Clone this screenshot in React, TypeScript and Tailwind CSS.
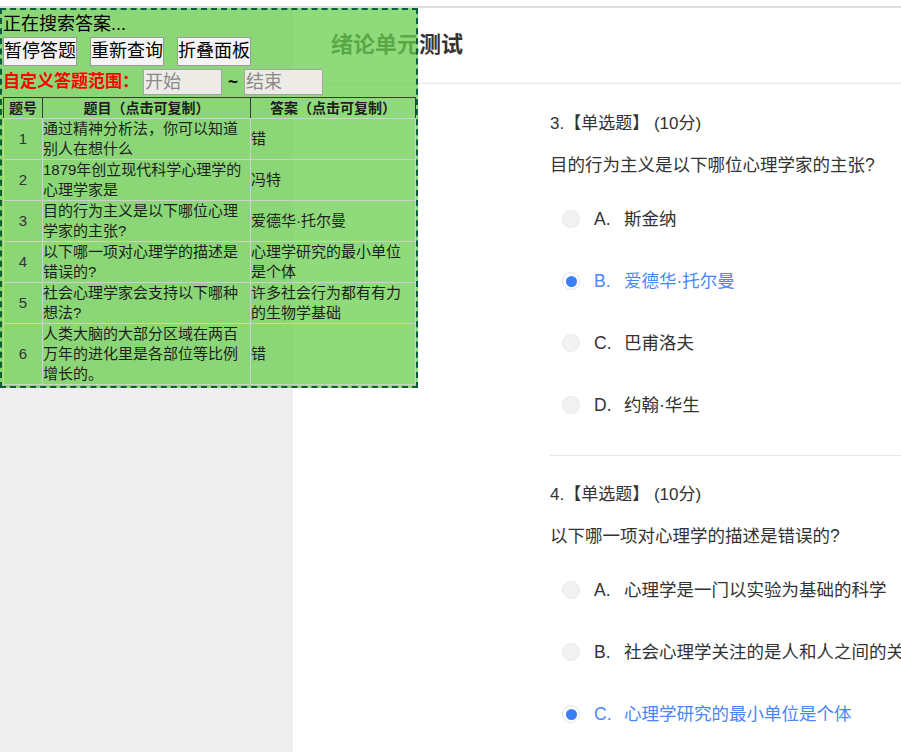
import React from "react";

const rows = [
  { q: "通过精神分析法，你可以知道别人在想什么", a: "错" },
  { q: "1879年创立现代科学心理学的心理学家是", a: "冯特" },
  { q: "目的行为主义是以下哪位心理学家的主张?", a: "爱德华·托尔曼" },
  { q: "以下哪一项对心理学的描述是错误的?", a: "心理学研究的最小单位是个体" },
  { q: "社会心理学家会支持以下哪种想法?", a: "许多社会行为都有有力的生物学基础" },
  { q: "人类大脑的大部分区域在两百万年的进化里是各部位等比例增长的。", a: "错" },
];

const questions = [
  {
    no: 3,
    text: "目的行为主义是以下哪位心理学家的主张?",
    options: ["斯金纳", "爱德华·托尔曼", "巴甫洛夫", "约翰·华生"],
    picked: 1,
  },
  {
    no: 4,
    text: "以下哪一项对心理学的描述是错误的?",
    options: ["心理学是一门以实验为基础的科学", "社会心理学关注的是人和人之间的关系", "心理学研究的最小单位是个体"],
    picked: 2,
  },
];

const letters = ["A.", "B.", "C.", "D."];

const Radio = ({ on }: { on: boolean }) =>
  on ? (
    <span className="w-[18px] h-[18px] rounded-full bg-white border border-[#e3e3e3] flex items-center justify-center shrink-0">
      <span className="w-[11px] h-[11px] rounded-full bg-[#3a7ff6]" />
    </span>
  ) : (
    <span className="w-[18px] h-[18px] rounded-full bg-[#f2f2f2] border border-[#e9e9e9] shrink-0" />
  );

const HelperPanel = () => (
  <div className="absolute left-0 top-[8px] w-[418px] border-2 border-dashed border-[#0b5d3f] bg-[rgba(106,207,79,0.75)] px-[1px] pb-[1px] text-black">
    <div className="pt-[2px] text-[18px] leading-[25px]">正在搜索答案...</div>
    <div className="flex gap-[13px]">
      {["暂停答题", "重新查询", "折叠面板"].map((b) => (
        <button
          key={b}
          className="h-[29px] px-0 bg-[#f4f4f4] border border-[#9a9a9a] text-[18px] leading-[27px] text-black"
        >
          {b}
        </button>
      ))}
    </div>
    <div className="mt-[3px] flex items-center h-[26px]">
      <span className="text-[17px] font-bold text-[#ff0000] leading-[26px]">自定义答题范围：</span>
      <input
        placeholder="开始"
        className="ml-[4px] w-[79px] h-[26px] bg-[#ecebe6] border border-[#a5a5a5] text-[18px] px-[1px] placeholder:text-[#8a8a8a] outline-none"
      />
      <span className="mx-[6px] font-bold text-[17px]">~</span>
      <input
        placeholder="结束"
        className="w-[79px] h-[26px] bg-[#ecebe6] border border-[#a5a5a5] text-[18px] px-[1px] placeholder:text-[#8a8a8a] outline-none"
      />
    </div>
    <table className="mt-[2px] w-[412px] table-fixed border-collapse text-[15px] leading-[20px] text-[#1e1e1e]">
      <colgroup>
        <col className="w-[39px]" />
        <col className="w-[208px]" />
        <col className="w-[165px]" />
      </colgroup>
      <thead>
        <tr className="text-[14px] font-bold">
          <th className="border border-[#3a3a3a] border-b-[#cfcfcf] p-0 leading-[20px]">题号</th>
          <th className="border border-[#3a3a3a] border-b-[#cfcfcf] p-0 leading-[20px]">题目（点击可复制）</th>
          <th className="border border-[#3a3a3a] border-b-[#cfcfcf] p-0 leading-[20px]">答案（点击可复制）</th>
        </tr>
      </thead>
      <tbody>
        {rows.map((r, i) => (
          <tr key={i}>
            <td className="border border-[#cfcfcf] p-0 text-center align-middle text-[#333]">{i + 1}</td>
            <td className="border border-[#cfcfcf] p-0 align-middle">{r.q}</td>
            <td className="border border-[#cfcfcf] p-0 align-middle">{r.a}</td>
          </tr>
        ))}
      </tbody>
    </table>
  </div>
);

export default function App() {
  return (
    <div className="relative w-[901px] h-[752px] overflow-hidden bg-white font-['Liberation_Sans','Noto_Sans_CJK_SC',sans-serif] text-[#333]">
      <div className="h-[6px]" />
      <div className="h-[2px] bg-[#dcdce0]" />
      <div className="flex h-[744px]">
        <aside className="w-[293px] bg-[#eeeeee] shrink-0" />
        <main className="flex-1 min-w-0 overflow-hidden">
          <header className="h-[76px] border-b border-[#e6e6e6] flex items-center pl-[38px] pb-[1px]">
            <h1 className="text-[22px] font-bold text-[#333] leading-[30px]">绪论单元测试</h1>
          </header>
          <div className="pl-[257px]">
            {questions.map((q, qi) => (
              <div key={q.no} className={qi > 0 ? "border-t border-[#e8e8e8] mt-[19px] pt-[27px]" : "pt-[28px]"}>
                <div className="text-[17px] leading-[24px] whitespace-nowrap">
                  {q.no}.【单选题】 (10分)
                </div>
                <div className="mt-[17px] text-[17.5px] leading-[24px] whitespace-nowrap">{q.text}</div>
                <div className="mt-[11px]">
                  {q.options.map((o, oi) => {
                    const on = oi === q.picked;
                    return (
                      <div key={oi} className="h-[62px] flex items-center pl-[12px] whitespace-nowrap">
                        <Radio on={on} />
                        <span className={`ml-[14px] w-[30px] shrink-0 text-[17.5px] ${on ? "text-[#4a86f7]" : "text-[#333]"}`}>
                          {letters[oi]}
                        </span>
                        <span className={`text-[17.5px] leading-[24px] ${on ? "text-[#4a86f7]" : "text-[#333]"}`}>{o}</span>
                      </div>
                    );
                  })}
                </div>
              </div>
            ))}
          </div>
        </main>
      </div>
      <HelperPanel />
    </div>
  );
}
